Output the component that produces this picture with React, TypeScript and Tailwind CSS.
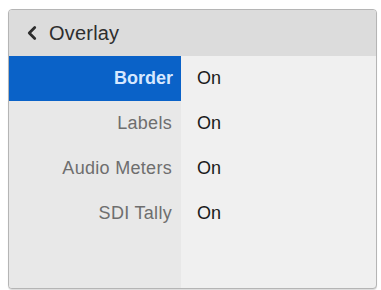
import { ChevronLeft } from "lucide-react";

const ROWS = [
  { label: "Border", value: "On", active: true },
  { label: "Labels", value: "On" },
  { label: "Audio Meters", value: "On" },
  { label: "SDI Tally", value: "On" },
];

export default function App() {
  return (
    <div className="w-[381px] h-[290px] bg-white pt-[9px] pl-[8px] font-['Liberation_Sans',Arial,sans-serif]">
      <div className="w-[369px] h-[280px] border border-[#b5b5b5] rounded-[4px] overflow-hidden flex flex-col bg-[#f0f0f0] shadow-[0_1px_1px_rgba(0,0,0,0.15)]">
        {/* header */}
        <div className="h-[46px] bg-[#dcdcdc] flex items-center pl-[12px] gap-[6px] text-[#2e2e2e] shrink-0">
          <ChevronLeft size={22} strokeWidth={3} />
          <span className="text-[20px] leading-none tracking-[0.2px]">Overlay</span>
        </div>
        <div className="flex flex-1">
          <div className="w-[172px] bg-[#e8e8e8] flex flex-col">
            {ROWS.map((r) => (
              <div
                key={r.label}
                className={
                  r.active
                    ? "h-[45px] flex items-center justify-end pr-[8px] bg-[#0a62c8] text-[#d6e8ff] text-[18px] font-bold"
                    : "h-[45px] flex items-center justify-end pr-[9px] text-[#6e6e6e] text-[18px] tracking-[0.3px]"
                }
              >
                {r.label}
              </div>
            ))}
          </div>
          <div className="flex-1 flex flex-col pl-[16px]">
            {ROWS.map((r) => (
              <div key={r.label} className="h-[45px] flex items-center text-[18px] text-[#1a1a1a]">
                {r.value}
              </div>
            ))}
          </div>
        </div>
      </div>
    </div>
  );
}
